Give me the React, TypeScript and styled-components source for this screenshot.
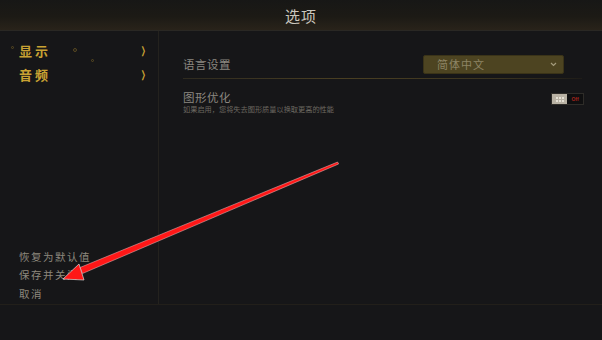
import React from "react";
import styled, { createGlobalStyle } from "styled-components";

const Global = createGlobalStyle`
  html, body { margin: 0; padding: 0; background: #161618; }
  body { font-family: "Noto Sans CJK SC", "Noto Sans", sans-serif; }
`;

const Screen = styled.div`
  position: relative;
  width: 602px;
  height: 340px;
  background: #161618;
  overflow: hidden;
  display: flex;
  flex-direction: column;
`;

const Header = styled.div`
  height: 31px;
  box-sizing: border-box;
  display: flex;
  align-items: center;
  justify-content: center;
  background: linear-gradient(180deg, #171716 0%, #1c1a15 55%, #29231a 100%);
  border-bottom: 1px solid #2a2824;
  color: #cbc7be;
  font-size: 15px;
  letter-spacing: 1px;
`;

const Body = styled.div`
  display: flex;
  height: 273px;
  border-bottom: 1px solid #221f1a;
`;

const Side = styled.div`
  width: 159px;
  border-right: 1px solid #24221e;
  display: flex;
  flex-direction: column;
  justify-content: space-between;
  padding: 10px 0 1px 19px;
  box-sizing: border-box;
`;

const Menu = styled.div`
  display: flex;
  flex-direction: column;
  gap: 5px;
`;

const MenuItem = styled.div`
  display: flex;
  align-items: center;
  justify-content: space-between;
  height: 19px;
  padding-right: 11px;
  color: #c9a233;
  font-size: 13px;
  font-weight: 700;
  letter-spacing: 3px;
`;

const Chevron = styled.span`
  font-family: "DejaVu Sans", sans-serif;
  font-size: 10px;
  font-weight: 700;
  letter-spacing: 0;
  transform: scaleX(0.6);
`;

const Links = styled.div`
  display: flex;
  flex-direction: column;
`;

const LinkItem = styled.div`
  height: 18.5px;
  line-height: 18.5px;
  color: #8d887e;
  font-size: 10.5px;
  letter-spacing: 1.5px;
`;

const Main = styled.div`
  flex: 1;
  padding: 23px 18px 0 24px;
  display: flex;
  flex-direction: column;
`;

const Row = styled.div`
  display: flex;
  align-items: center;
  justify-content: space-between;
`;

const LangRow = styled(Row)`
  height: 20px;
  padding-bottom: 4px;
  margin-right: 2px;
  border-bottom: 1px solid transparent;
  border-image: linear-gradient(90deg, #2e2a1f, #4a3f22 40%, #3a331f 80%, #1e1c18) 1;
  padding-right: 18px;
`;

const Label = styled.div`
  color: #8b8780;
  font-size: 11.5px;
  line-height: 13px;
  letter-spacing: 0.5px;
  margin-top: 1px;
`;

const Select = styled.div`
  width: 141px;
  height: 19px;
  box-sizing: border-box;
  background: #4d4421;
  border: 1px solid #3a3318;
  border-radius: 2px;
  display: flex;
  align-items: center;
  justify-content: space-between;
  padding: 0 6px 0 13px;
  color: #8e8565;
  font-size: 11px;
  letter-spacing: 1px;
`;

const Caret = styled.svg`
  width: 7px;
  height: 5px;
`;

const GfxRow = styled(Row)`
  margin-top: 11px;
  align-items: flex-start;
`;

const Texts = styled.div`
  display: flex;
  flex-direction: column;
`;

const Hint = styled.div`
  color: #6c6860;
  font-size: 7.2px;
  line-height: 9px;
  margin-top: 1px;
`;

const Toggle = styled.div`
  margin-top: 3px;
  width: 33px;
  height: 12px;
  box-sizing: border-box;
  border: 1px solid #2e2c28;
  background: #0f0f10;
  display: flex;
  align-items: center;
`;

const Knob = styled.div`
  width: 15px;
  height: 10px;
  background: #b9b2a4;
  display: grid;
  grid-template-columns: repeat(3, 2px);
  grid-template-rows: repeat(2, 2px);
  gap: 1px;
  place-content: center;
`;

const Dot = styled.span`
  background: #e5e0d4;
`;

const OffText = styled.span`
  flex: 1;
  text-align: center;
  color: #a3241c;
  font-size: 5px;
  font-family: "Liberation Sans", sans-serif;
  font-weight: 700;
`;

const Bokeh = styled.span<{ x: number; y: number; s: number }>`
  position: absolute;
  left: ${(p) => p.x}px;
  top: ${(p) => p.y}px;
  width: ${(p) => p.s}px;
  height: ${(p) => p.s}px;
  border-radius: 50%;
  border: 1px solid #5a4a22;
  box-sizing: border-box;
`;

const Overlay = styled.svg`
  position: absolute;
  left: 0;
  top: 0;
  pointer-events: none;
`;

export default function App() {
  return (
    <Screen>
      <Global />
      <Header>选项</Header>
      <Body>
        <Side>
          <Menu>
            <MenuItem>
              显示<Chevron>❯</Chevron>
            </MenuItem>
            <MenuItem>
              音频<Chevron>❯</Chevron>
            </MenuItem>
          </Menu>
          <Links>
            <LinkItem>恢复为默认值</LinkItem>
            <LinkItem>保存并关闭</LinkItem>
            <LinkItem>取消</LinkItem>
          </Links>
        </Side>
        <Main>
          <LangRow>
            <Label>语言设置</Label>
            <Select>
              简体中文
              <Caret viewBox="0 0 7 5">
                <path d="M1 1 L3.5 3.5 L6 1" stroke="#a39b7c" strokeWidth="1.2" fill="none" />
              </Caret>
            </Select>
          </LangRow>
          <GfxRow>
            <Texts>
              <Label>图形优化</Label>
              <Hint>如果启用，您将失去图形质量以换取更高的性能</Hint>
            </Texts>
            <Toggle>
              <Knob>
                {Array.from({ length: 6 }).map((_, i) => (
                  <Dot key={i} />
                ))}
              </Knob>
              <OffText>Off</OffText>
            </Toggle>
          </GfxRow>
        </Main>
      </Body>
      <Bokeh x={11} y={46} s={3} />
      <Bokeh x={73} y={48} s={4} />
      <Bokeh x={91} y={59} s={3} />
      <Overlay width="602" height="340" viewBox="0 0 602 340">
        <polygon
          points="338.6,164 337.6,162 80,267.5 82.5,273.5"
          fill="#ff1717"
          stroke="#ecc4c4"
          strokeWidth="0.5"
        />
        <polygon points="63,279 79,264 84,280" fill="#ff1717" stroke="#d9d9d9" strokeWidth="0.7" />
      </Overlay>
    </Screen>
  );
}
